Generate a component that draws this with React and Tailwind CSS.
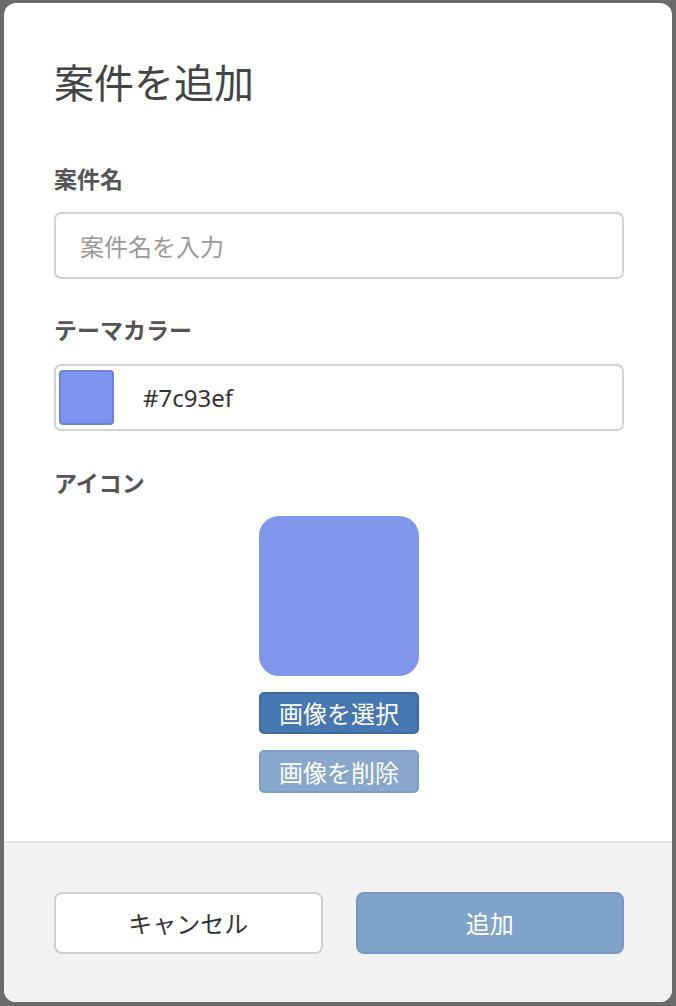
import React, { useState } from 'react'

const jp = { fontFamily: '"Noto Sans CJK JP", "Noto Sans", sans-serif' }

const Label = ({ children }) => (
  <div className="h-[28px] leading-[28px] text-[23px] font-bold text-[#555]">{children}</div>
)

export default function App() {
  const [name, setName] = useState('')
  const color = '#7c93ef'

  return (
    <div className="min-h-screen bg-[#6b6b6b] px-[4px] py-[3px]" style={jp}>
      <div className="h-[999px] rounded-[12px] bg-white overflow-hidden flex flex-col">
        {/* body */}
        <div className="flex-1 pl-[50px] pr-[48px] pt-[56px] flex flex-col">
          <h1 className="h-[44px] leading-[44px] text-[40px] text-[#444]">案件を追加</h1>

          <div className="mt-[61px]">
            <Label>案件名</Label>
          </div>
          <input
            className="mt-[20px] h-[67px] w-full rounded-[7px] border-2 border-[#d2d2d2] px-[24px] text-[24px] text-[#333] placeholder:text-[#9a9a9a] outline-none"
            placeholder="案件名を入力"
            value={name}
            onChange={e => setName(e.target.value)}
          />

          <div className="mt-[36px]">
            <Label>テーマカラー</Label>
          </div>
          <div className="mt-[21px] h-[67px] w-full rounded-[7px] border-2 border-[#d2d2d2] flex items-center pl-[3px]">
            <div className="w-[55px] h-[55px] rounded-[4px] border-2 border-[#6b82d6] bg-[#7c93ef]" />
            <span className="ml-[29px] text-[24px] text-[#333]" style={{ fontFamily: '"Noto Sans", "Liberation Sans", sans-serif' }}>{color}</span>
          </div>

          <div className="mt-[37px]">
            <Label>アイコン</Label>
          </div>
          <div className="mt-[20px] flex flex-col items-center">
            <div className="w-[160px] h-[160px] rounded-[20px] bg-[#8096ea]" />
            <button className="mt-[16px] w-[160px] h-[42px] rounded-[5px] border-2 border-[#3b6a9e] bg-[#4677b0] text-white text-[24px] leading-none">画像を選択</button>
            <button className="mt-[16px] w-[160px] h-[43px] rounded-[5px] border-2 border-[#7e9dc4] bg-[#88a7cb] text-white text-[24px] leading-none">画像を削除</button>
          </div>
        </div>

        {/* footer */}
        <div className="h-[161px] border-t-2 border-[#e4e4e4] bg-[#f2f2f2] pl-[50px] pr-[48px] flex items-center gap-[33px]">
          <button className="flex-1 h-[62px] rounded-[8px] border-2 border-[#d0d0d0] bg-white text-[24px] text-[#333]">キャンセル</button>
          <button className="flex-1 h-[62px] rounded-[8px] border-2 border-[#7896bf] bg-[#82a3c9] text-[24px] text-white">追加</button>
        </div>
      </div>
    </div>
  )
}
